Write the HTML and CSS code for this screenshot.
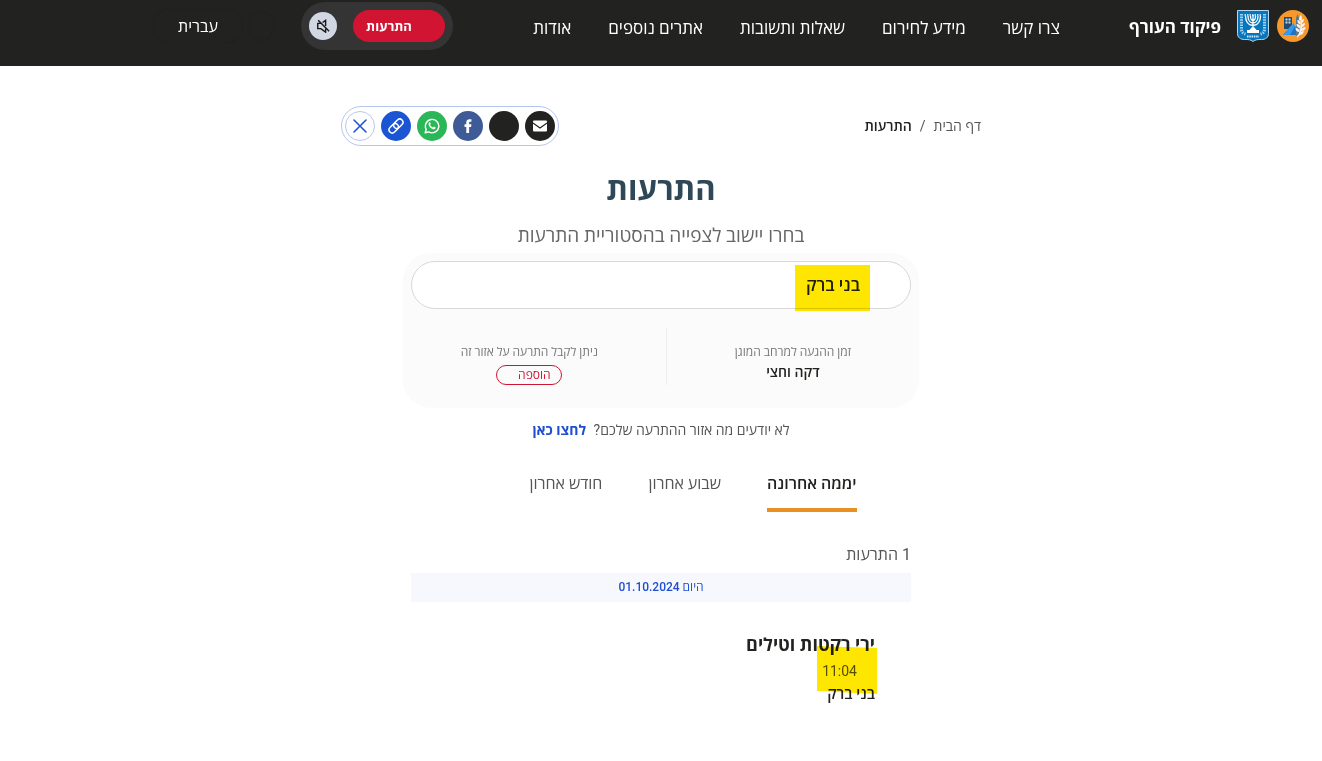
FILE: index.html
```
<!DOCTYPE html>
<html lang="he" dir="rtl">
<head>
  <meta charset="UTF-8">
  <title>התרעות</title>
  <meta name="viewport" content="width=device-width,initial-scale=1">
  <link rel="stylesheet" href="styles.css">
</head>
<body>
<header class="site-header">
  <div class="brand">
    <svg class="logo" viewBox="0 0 32 32">
      <circle cx="16" cy="16" r="16" fill="#f7982d"/>
      <path d="M7 7h8v12H7z" fill="#244a6c"/>
      <path d="M8.500 8.500h2v2h-2zM11.500 8.500h2v2h-2zM8.500 11.500h2v2h-2zM11.500 11.500h2v2h-2z" fill="#c9dbe8"/>
      <path d="M5.500 25L16.500 13 22 25z" fill="#2f9af0"/>
      <path d="M13 25l5-9 4 9z" fill="#1b74c4"/>
      <path d="M20.500 4l1.500 4v17l-2 2-1-2V8z" fill="#60788c"/>
      <path d="M20 27c4-3 5-8 4-19" fill="none" stroke="#f3f6f8" stroke-width="1.400"/>
      <path d="M22 10c0-3 1-4 2-5 1 2 1 3 0 5zM24 13c0-3 1-4 3-4 0 2-1 4-3 4zM24 17c1-3 2-4 4-4 0 2-1 4-4 4zM23.500 21c1-3 3-4 5-4 0 3-2 4-5 4zM22 25c1-3 3-4 5-4-1 3-2 4-5 4zM23.500 14c-3 0-3-2-3-4 2 0 3 1 3 4zM23.500 18c-3 0-4-2-4-4 3 0 4 2 4 4zM22.500 22c-3 0-4-2-4-4 3 0 4 2 4 4z" fill="#f3f6f8"/>
    </svg>
    <svg class="logo" viewBox="0 0 32 32">
      <path d="M.5.5h31v23c0 4-3 6-7 6-4 0-6 0-8.500 2-2.500-2-4.500-2-8.500-2-4 0-7-2-7-6z" fill="#0876bc" stroke="#b5d8ef"/>
      <path d="M8.500 6c0 4 2 9.500 7.500 9.500S23.500 10 23.500 6M11 6c0 4 2 7 5 7s5-3 5-7M13.500 6c0 3 1 4.500 2.500 4.500s2.500-1.500 2.500-4.500M16 5v15" fill="none" stroke="#fff" stroke-width="1.300"/>
      <path d="M7.500 5h17" stroke="#fff" stroke-width="1.400" stroke-dasharray="1.500 1"/>
      <path d="M10 23v-3h2.500l2-2.500h3l2 2.500H22v3z" fill="#fff"/>
      <path d="M4.500 4v15c0 2.500 1 4 4 5M27.500 4v15c0 2.500-1 4-4 5" fill="none" stroke="#a9d2ee" stroke-width="3" stroke-dasharray="1.600 1"/>
      <path d="M10 26.500h12" stroke="#d9edf8" stroke-width="2" stroke-dasharray="1.500 .8"/>
    </svg>
    <span class="brand-name">פיקוד העורף</span>
  </div>
  <nav class="main-nav">
    <a href="#">צרו קשר</a>
    <a href="#">מידע לחירום</a>
    <a href="#">שאלות ותשובות</a>
    <a href="#">אתרים נוספים</a>
    <a href="#">אודות</a>
  </nav>
  <div class="header-tools">
    <div class="alert-box">
      <button class="alert-btn" type="button">התרעות</button>
      <button class="mute-btn" type="button">
        <svg viewBox="0 0 16 16"><path d="M5.500 5H2v6h3.500l5.500 4v-4M7.500 4L11 1.500V8M2.500 1.500l12.500 12.500" fill="none" stroke="#161616" stroke-width="1.600"/></svg>
      </button>
    </div>
    <span class="ghost-circle"></span>
    <button class="lang-btn" type="button">עברית</button>
  </div>
</header>

<main class="page">
  <div class="top-row">
    <div class="breadcrumbs">
      <a href="#">דף הבית</a><span>/</span><b>התרעות</b>
    </div>
    <div class="share">
      <a class="share-item dark" href="#"><svg viewBox="0 0 16 16"><rect x="1" y="2.500" width="14" height="11" rx="1" fill="#fff"/><path d="M1 5l7 5 7-5" fill="none" stroke="#222220" stroke-width="1.100"/></svg></a>
      <a class="share-item dark" href="#"></a>
      <a class="share-item facebook" href="#"><svg viewBox="0 0 16 16"><path d="M6.300 15V9H4.500V6.200h1.800V4.500C6.300 2.300 7.500 1.200 9.600 1.200h1.800v2.600h-1.200c-.8 0-1.100.4-1.100 1.100v1.300h2.300L11.100 9h-2v6z" fill="#fff"/></svg></a>
      <a class="share-item whatsapp" href="#"><svg viewBox="0 0 16 16"><path d="M1.200 14.800l1-3.500A6.700 6.700 0 1 1 4.700 13.900z" fill="none" stroke="#fff" stroke-width="1.400" stroke-linejoin="round"/><path d="M5 4.600c.4-.5 1-.5 1.200 0l.5 1.200c.1.300-.5.900-.5 1.100.5 1.100 1.500 1.900 2.600 2.400.3 0 .8-.9 1.100-.8l1.500.7c.4.300.1 1.300-.4 1.700-1 .8-2.700.2-4.200-.9C5 8.600 3.800 6.200 5 4.600z" fill="#fff"/></svg></a>
      <a class="share-item link" href="#"><svg viewBox="0 0 16 16"><g fill="none" stroke="#fff" stroke-width="1.500" transform="rotate(-45 8 8)"><rect x="-.5" y="4.800" width="10.500" height="6.400" rx="3.200"/><rect x="6" y="4.800" width="10.500" height="6.400" rx="3.200"/></g></svg></a>
      <button class="share-item close" type="button"><svg viewBox="0 0 16 16"><path d="M2 2l12 12M14 2L2 14" stroke="#1f57d0" stroke-width="1.600" stroke-linecap="round"/></svg></button>
    </div>
  </div>

  <h1>התרעות</h1>
  <label class="subtitle" for="city">בחרו יישוב לצפייה בהסטוריית התרעות</label>

  <section class="city-card">
    <div class="search">
      <input id="city" type="text" value="בני ברק">
      <span class="marker marker-city"></span>
    </div>
    <div class="city-info">
      <div class="info-cell">
        <span class="info-label">זמן ההגעה למרחב המוגן</span>
        <b>דקה וחצי</b>
      </div>
      <div class="divider"></div>
      <div class="info-cell add-cell">
        <span class="info-label">ניתן לקבל התרעה על אזור זה</span>
        <button class="add-btn" type="button">הוספה</button>
      </div>
    </div>
  </section>

  <p class="help">לא יודעים מה אזור ההתרעה שלכם? <a href="#">לחצו כאן</a></p>

  <div class="tabs">
    <button class="tab active" type="button">יממה אחרונה</button>
    <button class="tab" type="button">שבוע אחרון</button>
    <button class="tab" type="button">חודש אחרון</button>
  </div>

  <section class="results">
    <p class="count">1 התרעות</p>
    <div class="day">היום 01.10.2024</div>
    <article class="alert">
      <h2>ירי רקטות וטילים</h2>
      <time>11:04</time>
      <p>בני ברק</p>
      <svg class="marker marker-time" viewBox="0 0 62 48"><path d="M1 0l60 2v46L1 45z" fill="#ffe600"/></svg>
    </article>
  </section>
</main>
</body>
</html>
```

FILE: styles.css
```
* {
  box-sizing: border-box;
}
body {
  margin: 0;
  background: #fff;
  color: #222220;
  font-family: Roboto, "Open Sans", "Noto Sans", sans-serif;
  font-size: 16px;
}
a {
  color: inherit;
  text-decoration: none;
}
button {
  font-family: inherit;
  cursor: pointer;
}
.site-header {
  display: flex;
  align-items: flex-start;
  height: 66px;
  padding: 2px 13px 0 152px;
  background: #222220;
  color: #fff;
  white-space: nowrap;
}
.brand {
  display: flex;
  align-items: center;
  gap: 8px;
  height: 48px;
}
.logo {
  width: 32px;
  height: 32px;
}
.brand-name {
  margin-right: 8px;
  font-size: 17px;
  font-weight: 700;
}
.main-nav {
  display: flex;
  gap: 37px;
  margin-right: 69px;
  font-size: 17px;
  line-height: 52px;
}
.header-tools {
  display: flex;
  align-items: center;
  margin-right: auto;
}
.alert-box {
  display: flex;
  align-items: center;
  gap: 16px;
  height: 48px;
  padding: 0 8px;
  border-radius: 24px;
  background: #343434;
}
.alert-btn {
  width: 92px;
  height: 32px;
  padding: 0 32px 0 12px;
  border: 0;
  border-radius: 16px;
  background: #d01432;
  color: #fff;
  font-size: 13px;
  font-weight: 700;
}
.mute-btn {
  display: flex;
  align-items: center;
  justify-content: center;
  width: 28px;
  height: 28px;
  padding: 0;
  border: 0;
  border-radius: 50%;
  background: #d2d8e3;
}
.mute-btn svg {
  width: 14px;
  height: 14px;
}
.ghost-circle {
  width: 28px;
  height: 32px;
  margin: 0 26px 0 3px;
  border: 2px solid #212220;
  border-radius: 50%;
}
.lang-btn {
  width: 92px;
  height: 36px;
  border: 2px solid #212220;
  border-radius: 18px;
  background: transparent;
  color: #fff;
  font-size: 16px;
}
.page {
  max-width: 640px;
  margin: 0 auto;
  padding: 40px 0;
}
.top-row {
  display: flex;
  align-items: center;
  justify-content: space-between;
}
.breadcrumbs {
  display: flex;
  gap: 8px;
  font-size: 14px;
  line-height: 20px;
  color: #555;
}
.breadcrumbs b {
  color: #222220;
  font-weight: 600;
}
.share {
  display: flex;
  align-items: center;
  gap: 6px;
  height: 40px;
  padding: 0 3px;
  border: 1px solid #b5c6ee;
  border-radius: 20px;
}
.share-item {
  display: flex;
  align-items: center;
  justify-content: center;
  width: 30px;
  height: 30px;
  padding: 0;
  border-radius: 50%;
}
.share-item svg {
  width: 16px;
  height: 16px;
}
.dark {
  background: #222220;
}
.facebook {
  background: #3f5b97;
}
.whatsapp {
  background: #2bb757;
}
.link {
  background: #1c55d3;
}
.close {
  border: 1px solid #b5c6ee;
  background: #fff;
}
h1 {
  margin: 20px 0 0;
  color: #2f4858;
  font-size: 31px;
  line-height: 48px;
  text-align: center;
}
.subtitle {
  display: block;
  margin-top: 6px;
  color: #666;
  font-size: 19px;
  line-height: 32px;
  text-align: center;
}
.city-card {
  max-width: 516px;
  margin: 1px auto 0;
  padding: 8px 0 23px;
  border-radius: 28px;
  background: #fbfbfb;
}
.search {
  position: relative;
  margin: 0 8px;
}
.search input {
  display: block;
  width: 100%;
  height: 48px;
  padding: 0 50px 2px;
  border: 1px solid #d8d8d8;
  border-radius: 24px;
  background: #fff;
  color: #222220;
  font-family: inherit;
  font-size: 17px;
  font-weight: 600;
}
.marker {
  position: absolute;
  mix-blend-mode: multiply;
  pointer-events: none;
}
.marker-city {
  top: 4px;
  right: 41px;
  width: 75px;
  height: 46px;
  background: #ffe600;
}
.city-info {
  display: grid;
  grid-template-columns: 49fr 1px 51fr;
  margin-top: 19px;
}
.divider {
  height: 57px;
  background: #eee;
}
.info-cell {
  display: flex;
  flex-direction: column;
  align-items: center;
  padding-top: 14px;
  font-size: 14px;
  line-height: 20px;
}
.info-cell b {
  font-weight: 600;
}
.add-cell {
  padding-right: 10px;
}
.info-label {
  color: #777;
  font-size: 12px;
}
.add-btn {
  width: 66px;
  height: 20px;
  margin-top: 3px;
  padding: 0 10px 0 20px;
  border: 1px solid #d01432;
  border-radius: 10px;
  background: transparent;
  color: #d01432;
  font-size: 12px;
  line-height: 16px;
}
.help {
  margin: 12px 0 0;
  color: #555;
  font-size: 14px;
  line-height: 20px;
  text-align: center;
}
.help a {
  margin-right: 4px;
  color: #1f4fd0;
  font-weight: 700;
}
.tabs {
  display: flex;
  justify-content: center;
  gap: 46px;
  margin-top: 24px;
  padding-left: 64px;
}
.tab {
  height: 48px;
  padding: 0 0 6px;
  border: 0;
  border-bottom: 4px solid transparent;
  background: none;
  color: #555;
  font-size: 16px;
}
.tab.active {
  border-color: #e89022;
  color: #222220;
  font-weight: 600;
}
.results {
  max-width: 500px;
  margin: 33px auto 0;
}
.count {
  margin: 0;
  color: #555;
  font-size: 16px;
  line-height: 20px;
}
.day {
  margin-top: 8px;
  background: #f6f8fe;
  color: #1f4fd0;
  font-size: 12px;
  font-weight: 500;
  line-height: 29px;
  text-align: center;
}
.alert {
  position: relative;
  margin-top: 30px;
  padding-right: 36px;
}
.alert h2 {
  margin: 0;
  font-size: 18px;
  line-height: 26px;
}
.alert time {
  display: block;
  padding-right: 18px;
  color: #555;
  font-size: 14px;
  line-height: 26px;
}
.alert p {
  margin: 0;
  font-size: 15px;
  font-weight: 600;
  line-height: 20px;
}
.marker-time {
  top: 14px;
  right: 33px;
  width: 62px;
  height: 48px;
}
```
